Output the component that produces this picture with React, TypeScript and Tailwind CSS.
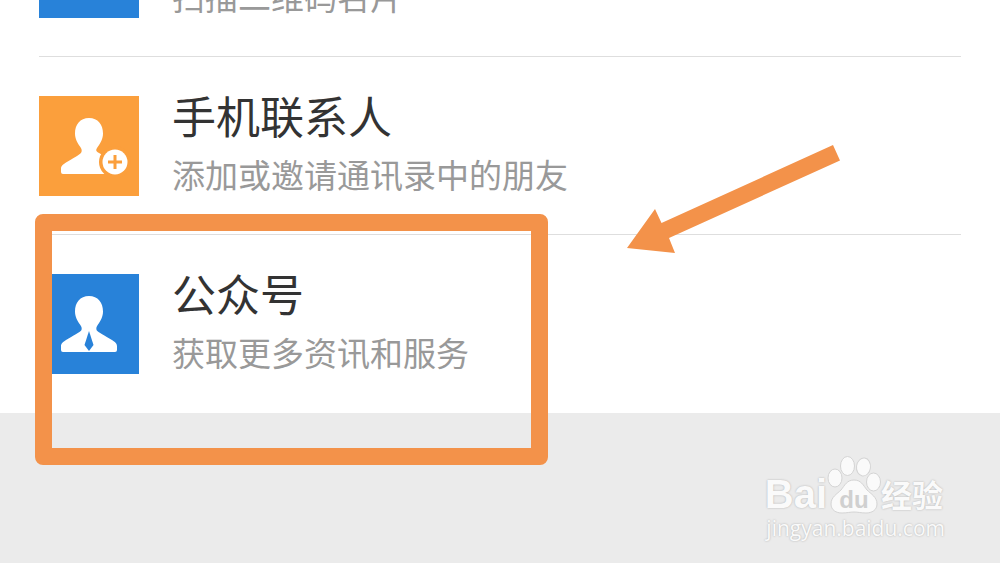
import React from "react";

const PERSON_HEAD =
  "M50 22C41 22 36 28.500 36 37.500C36 43 38.500 47 41 50.500C42.500 52.500 43 54 42.500 56";

interface Entry {
  id: string;
  title: string;
  subtitle: string;
  icon: React.ReactNode;
  highlighted?: boolean;
}

const ScanIcon: React.FC = () => (
  <svg viewBox="0 0 100 100" className="size-[100px] shrink-0 bg-[#2882d9]" aria-hidden="true">
    <path
      d="M26 40V26H40M60 26H74V40M74 60V74H60M40 74H26V60M24 50H76"
      fill="none"
      stroke="#fff"
      strokeWidth="4"
    />
  </svg>
);

const ContactsIcon: React.FC = () => (
  <svg viewBox="0 0 100 100" className="size-[100px] shrink-0 bg-[#fb9f3c]" aria-hidden="true">
    <path
      d={`${PERSON_HEAD}C41 59 34 62 27 66.500C23 69 22 70.500 22 73V76Q22 78 24 78H76V66L60 57C56 55 57 53.500 59 50.500C61.500 47 64 43 64 37.500C64 28.500 59 22 50 22Z`}
      fill="#fff"
    />
    <circle cx="76" cy="66" r="16" fill="#fb9f3c" />
    <path d="M66 78H80V84H66Z" fill="#fb9f3c" />
    <circle cx="76" cy="66" r="12.500" fill="#fff" />
    <path d="M76 59V73M69 66H83" stroke="#fb9f3c" strokeWidth="3" />
  </svg>
);

const OfficialIcon: React.FC = () => (
  <svg viewBox="0 0 100 100" className="size-[100px] shrink-0 bg-[#2882d9]" aria-hidden="true">
    <path
      d={`${PERSON_HEAD}C41 58.500 34 61.500 27 66C23 68.500 22 70 22 72.500V76Q22 78 24 78H76Q78 78 78 76V72.500C78 70 77 68.500 73 66C66 61.500 59 58.500 57.500 56C57 54 57.500 52.500 59 50.500C61.500 47 64 43 64 37.500C64 28.500 59 22 50 22Z`}
      fill="#fff"
    />
    <path d="M50 57L45.500 71L50 77L54.500 71Z" fill="#2882d9" />
  </svg>
);

const entries: Entry[] = [
  { id: "scan", title: "扫一扫", subtitle: "扫描二维码名片", icon: <ScanIcon /> },
  {
    id: "contacts",
    title: "手机联系人",
    subtitle: "添加或邀请通讯录中的朋友",
    icon: <ContactsIcon />,
  },
  {
    id: "official",
    title: "公众号",
    subtitle: "获取更多资讯和服务",
    icon: <OfficialIcon />,
    highlighted: true,
  },
];

const EntryRow: React.FC<{ entry: Entry }> = ({ entry }) => (
  <li className="relative border-b border-[#dedede] last:border-transparent">
    <a href={`#${entry.id}`} className="flex gap-[33px] pt-[39px] pb-[38px]">
      {entry.icon}
      <div className="flex flex-col gap-5 whitespace-nowrap">
        <span className="text-[44px] leading-[38px] text-[#333]">{entry.title}</span>
        <span className="text-[33px] leading-[40px] text-[#999]">{entry.subtitle}</span>
      </div>
    </a>
    {entry.highlighted && (
      <>
        {/* marker frame and pointer lying over the row */}
        <div className="pointer-events-none absolute -top-[21px] -left-1 h-[251px] w-[513px] rounded-lg border-[17px] border-[#f3924a]" />
        <svg
          viewBox="0 0 214 110"
          className="pointer-events-none absolute -top-[91px] left-[587px] h-[110px] w-[214px]"
          aria-hidden="true"
        >
          <path d="M207 1L214 16.500L43 94L49 109L1 104L29 65L35.500 79Z" fill="#f3924a" />
        </svg>
      </>
    )}
  </li>
);

const Watermark: React.FC = () => (
  <div className="flex flex-col items-end text-[#fafafa] [text-shadow:0_0_2px_#aaa]">
    <div className="flex items-end pr-0.5">
      <span className="font-['Liberation_Sans',sans-serif] text-[40px] leading-[40px] font-bold">
        Bai
      </span>
      <div className="relative h-[58px] w-[54px]">
        <svg viewBox="0 0 54 58" className="size-full" aria-hidden="true">
          <g fill="#fafafa" stroke="#d4d4d4" strokeWidth="1">
            <ellipse cx="8" cy="22" rx="7" ry="9" />
            <ellipse cx="20.500" cy="10" rx="7" ry="9.500" />
            <ellipse cx="36.500" cy="11" rx="7" ry="9" transform="rotate(8 36.500 11)" />
            <ellipse cx="46.500" cy="26" rx="7" ry="9" />
            <path d="M27 24C20 24 18 29 14 34C10 38 4 41 4 48C4 54 9 57 15 57C20 57 23 56 27 56C31 56 34 57 39 57C45 57 50 54 50 48C50 41 44 38 40 34C36 29 34 24 27 24Z" />
          </g>
        </svg>
        <span className="absolute inset-x-0 bottom-0 text-center font-['Liberation_Sans',sans-serif] text-[24px] leading-[28px] font-bold text-[#d0d0d0] [text-shadow:none]">
          du
        </span>
      </div>
      <span className="text-[31px] leading-[40px] font-bold">经验</span>
    </div>
    <span className="font-['Open_Sans',sans-serif] text-[21px] leading-[28px]">
      jingyan.baidu.com
    </span>
  </div>
);

const App: React.FC = () => {
  return (
    <div className="flex h-screen flex-col overflow-hidden bg-[#ebebeb] font-['Noto_Sans_CJK_SC',sans-serif]">
      {/* list is scrolled so that the first row is mostly out of view */}
      <main className="-mt-[121px] shrink-0 bg-white px-[39px]">
        <ul>
          {entries.map((entry) => (
            <EntryRow key={entry.id} entry={entry} />
          ))}
        </ul>
      </main>
      <footer className="flex justify-end pt-[43px] pr-[55px]">
        <Watermark />
      </footer>
    </div>
  );
};

export default App;
